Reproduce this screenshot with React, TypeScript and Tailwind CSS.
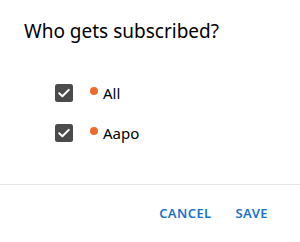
const people = [
  { name: "All", checked: true },
  { name: "Aapo", checked: true },
];

function CheckIcon() {
  return (
    <svg viewBox="0 0 18 18" className="w-[18px] h-[18px]">
      <rect x="0" y="0" width="18" height="18" rx="2.5" fill="#4b4b4b" />
      <path
        d="M4.2 9.2l3.2 3.1 6.4-6.4"
        fill="none"
        stroke="#ffffff"
        strokeWidth="2"
        strokeLinecap="round"
        strokeLinejoin="round"
      />
    </svg>
  );
}

export default function App() {
  return (
    <div
      className="w-[300px] h-[242px] bg-white flex flex-col text-black"
      style={{ fontFamily: '"Noto Sans", "Open Sans", sans-serif' }}
    >
      <h2 className="pt-[16px] pl-[24px] text-[19px] leading-[30px] font-normal">
        Who gets subscribed?
      </h2>

      <div className="flex flex-col gap-[22px] pt-[38px] pl-[55px]">
        {people.map((p) => (
          <label key={p.name} className="flex items-center h-[18px]">
            <CheckIcon />
            <span className="ml-[17px] w-[8px] h-[8px] rounded-full bg-[#ee6b2d] -translate-y-[2px]" />
            <span className="ml-[5px] text-[15px] leading-[18px]">{p.name}</span>
          </label>
        ))}
      </div>

      <div className="mt-auto border-t border-[#e6e6e6] h-[58px] flex items-center justify-end gap-[24px] pr-[32px]">
        <button className="text-[13px] font-semibold tracking-[0.4px] text-[#1a73c9]">CANCEL</button>
        <button className="text-[13px] font-semibold tracking-[0.4px] text-[#1a73c9]">SAVE</button>
      </div>
    </div>
  );
}
